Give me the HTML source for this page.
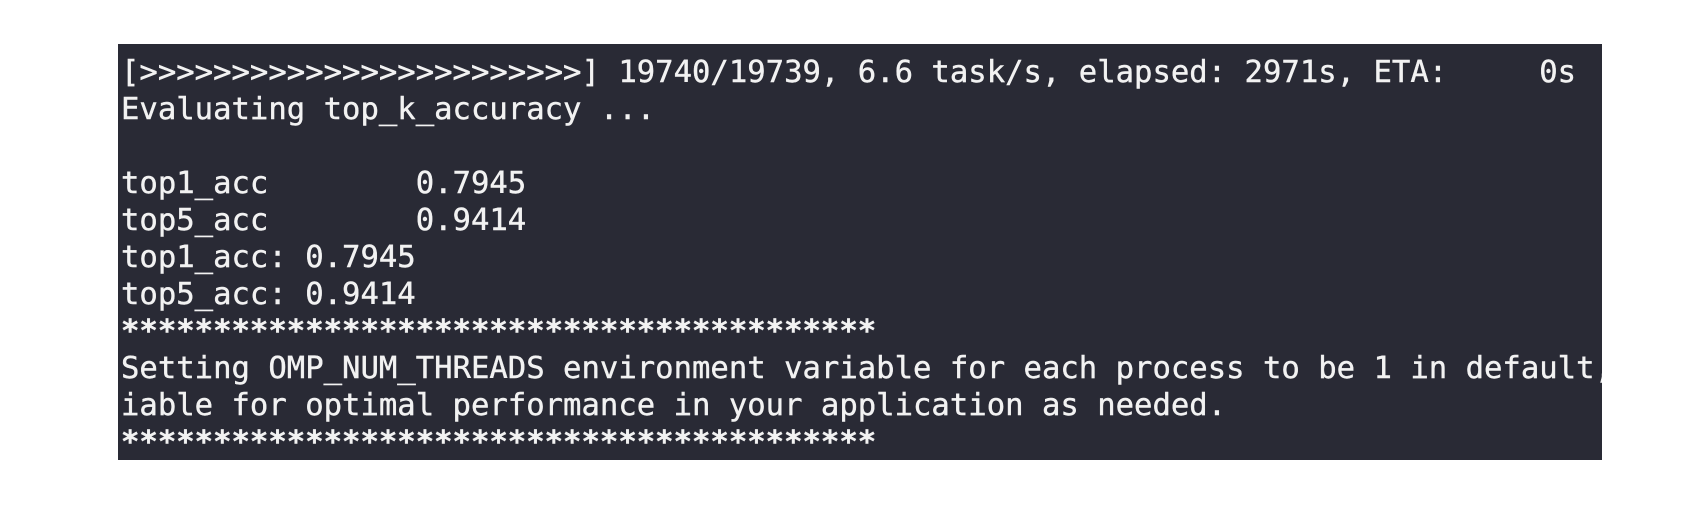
<!DOCTYPE html>
<html><head><style>
html,body{margin:0;padding:0;background:#fff;width:1700px;height:518px;overflow:hidden}
.box{position:absolute;left:118px;top:44px;width:1484px;height:416px;background:#292a35;overflow:hidden}
pre{margin:0;position:absolute;left:3px;top:10px;font-family:"DejaVu Sans Mono","Liberation Mono",monospace;font-size:30.6px;line-height:37px;color:#f2f2f2;white-space:pre;-webkit-text-stroke:0.4px #f2f2f2}
b{font-weight:bold}
</style></head><body>
<div class="box"><pre>[&gt;&gt;&gt;&gt;&gt;&gt;&gt;&gt;&gt;&gt;&gt;&gt;&gt;&gt;&gt;&gt;&gt;&gt;&gt;&gt;&gt;&gt;&gt;&gt;] 19740/19739, 6.6 task/s, elapsed: 2971s, ETA:     0s
Evaluating top_k_accuracy ...

top1_acc        0.7945
top5_acc        0.9414
top1_acc: 0.7945
top5_acc: 0.9414
<b>*****************************************</b>
Setting OMP_NUM_THREADS environment variable for each process to be 1 in default, to avoid your system being overloaded, please further tune the var
iable for optimal performance in your application as needed.
<b>*****************************************</b></pre></div>
</body></html>
